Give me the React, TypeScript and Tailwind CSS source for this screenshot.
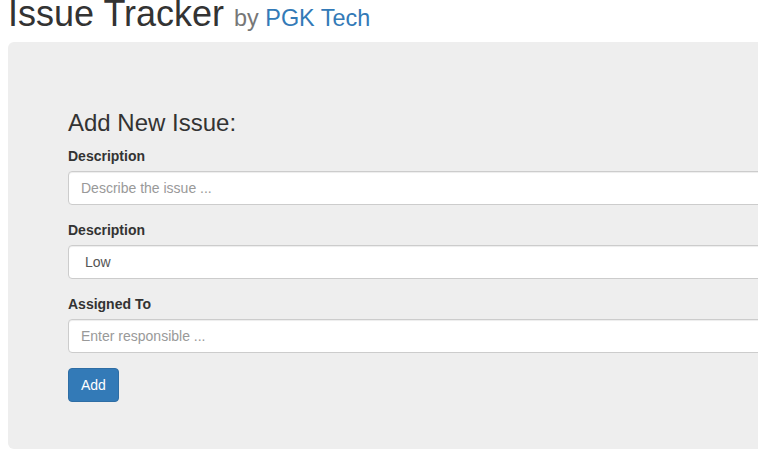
import React from "react";

export default function App() {
  const font = { fontFamily: '"Liberation Sans", Arial, Helvetica, sans-serif' };
  return (
    <div className="w-[758px] h-[463px] overflow-hidden bg-white text-[#333] text-[14px] leading-[20px]" style={font}>
      <div className="w-[1100px] px-2">
        <h1 className="mt-[-6px] mb-[3px] text-[36px] leading-[39.6px] font-normal text-[#333]">
          Issue Tracker{" "}
          <small className="text-[23.4px] text-[#777] font-normal">
            by <a className="text-[#337ab7]">PGK Tech</a>
          </small>
        </h1>
        <div className="bg-[#eee] rounded-[6px] pt-[48px] pb-[47px] px-[60px]">
          <h3 className="mt-[20px] mb-[10px] text-[24px] leading-[26.4px] font-normal">Add New Issue:</h3>
          <form className="flex flex-col">
            <div className="mb-[15px] flex flex-col">
              <label className="font-bold mb-[5px] leading-[20px]">Description</label>
              <input
                className="h-[34px] px-[12px] py-[6px] bg-white border border-[#ccc] rounded-[4px] text-[#555] placeholder:text-[#999] shadow-[inset_0_1px_1px_rgba(0,0,0,0.075)] outline-none"
                placeholder="Describe the issue ..."
              />
            </div>
            <div className="mb-[15px] flex flex-col">
              <label className="font-bold mb-[5px] leading-[20px]">Description</label>
              <div className="h-[34px] pl-[16px] pr-[12px] flex items-center bg-white border border-[#ccc] rounded-[4px] text-[#555] shadow-[inset_0_1px_1px_rgba(0,0,0,0.075)]">
                Low
              </div>
            </div>
            <div className="mb-[15px] flex flex-col">
              <label className="font-bold mb-[5px] leading-[20px]">Assigned To</label>
              <input
                className="h-[34px] px-[12px] py-[6px] bg-white border border-[#ccc] rounded-[4px] text-[#555] placeholder:text-[#999] shadow-[inset_0_1px_1px_rgba(0,0,0,0.075)] outline-none"
                placeholder="Enter responsible ..."
              />
            </div>
            <div>
              <button
                type="button"
                className="h-[34px] px-[12px] bg-[#337ab7] border border-[#2e6da4] rounded-[4px] text-white leading-[20px]"
              >
                Add
              </button>
            </div>
          </form>
        </div>
      </div>
    </div>
  );
}
